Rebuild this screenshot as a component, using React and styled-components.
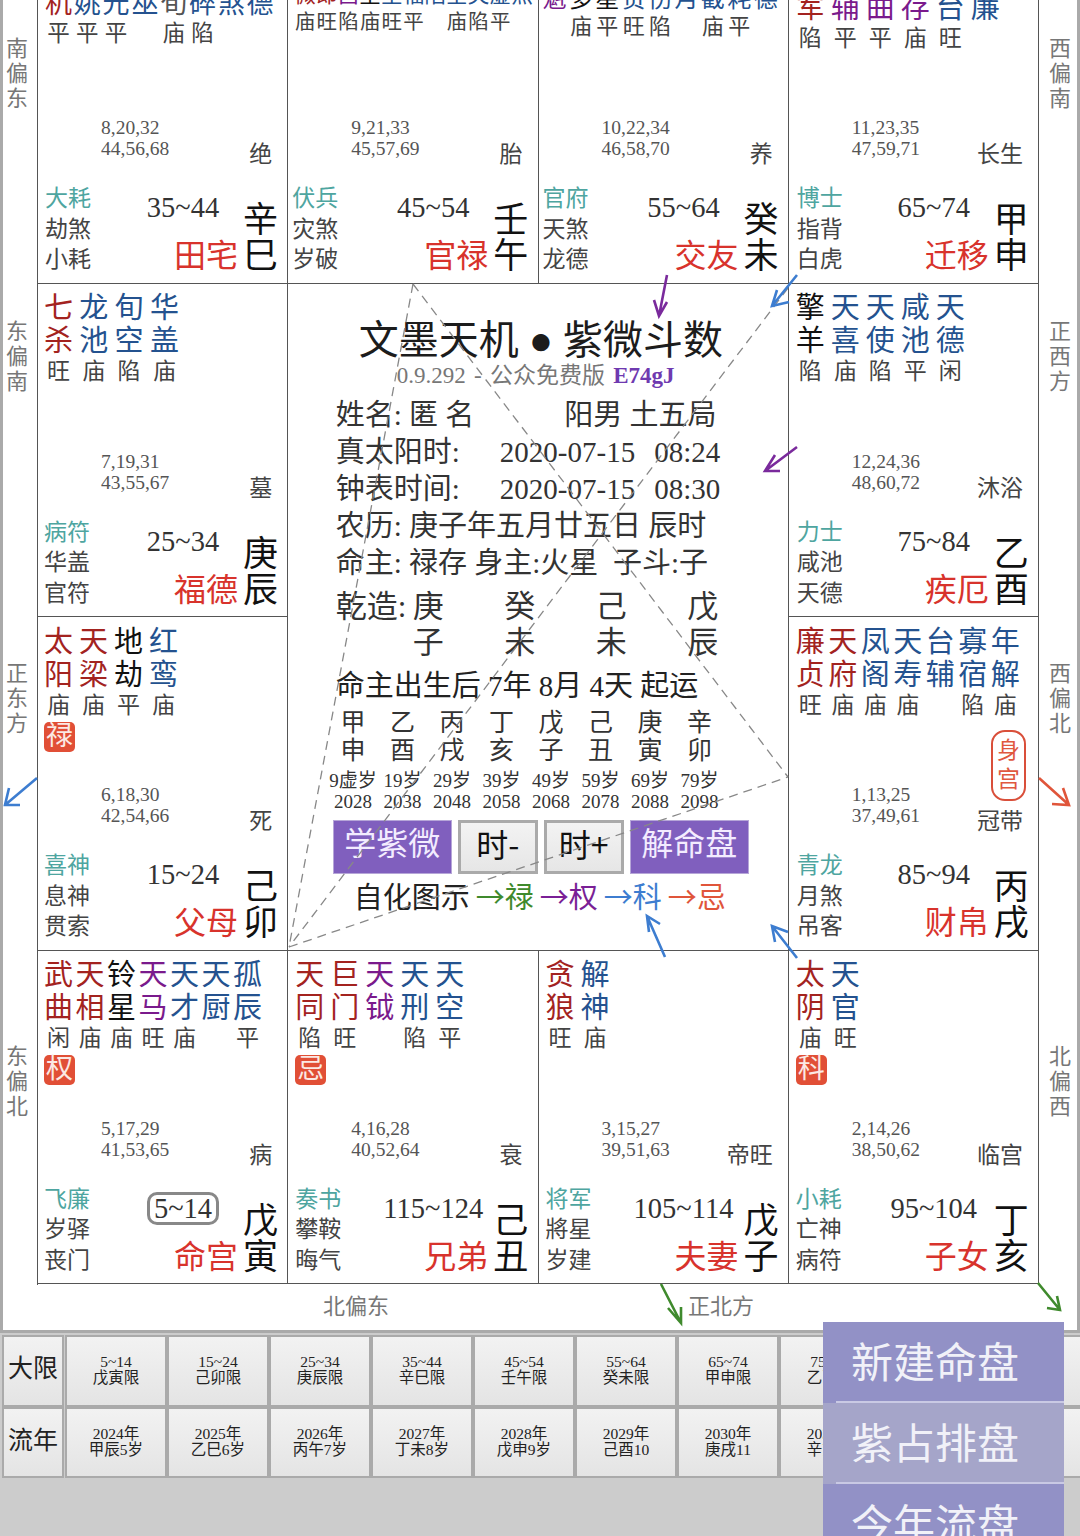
import React from "react";
import styled, { createGlobalStyle } from "styled-components";

const FONT = '"Liberation Serif", "Noto Sans CJK SC", serif';
const SANS = '"Noto Sans CJK SC", sans-serif';
const RED = "#a3231f";
const BLUE = "#24528f";
const PURPLE = "#7a1a8c";
const BLACK = "#111111";

// [上字, 下字, 颜色, 亮度, 四化]
const palaces = [
  {
    size: 27, step: 28.8, brightSize: 22.5, pad: 7, gx: 7,
    stars: [["天", "机", RED, "平"], ["天", "姚", BLUE, "平"], ["恩", "光", BLUE, "平"], ["天", "巫", BLUE, ""], ["截", "旬", "#555", "庙"], ["天", "碎", BLUE, "陷"], ["阴", "煞", BLUE, ""], ["月", "德", BLUE, ""]],
    nums: ["8,20,32", "44,56,68"], stage: "绝", god: ["大耗", "劫煞", "小耗"], range: "35~44", name: "田宅", stem: "辛", branch: "巳",
  },
  {
    size: 21.5, step: 21.7, brightSize: 20.5, pad: 6, gx: 4,
    stars: [["紫", "微", RED, "庙"], ["破", "郎", RED, "旺"], ["文", "昌", PURPLE, "陷"], ["火", "星", BLACK, "庙"], ["天", "星", BLUE, "旺"], ["天", "福", BLUE, "平"], ["截", "陷", BLUE, ""], ["地", "空", BLUE, "庙"], ["天", "哭", BLUE, "陷"], ["天", "虚", BLUE, "平"], ["阴", "煞", BLUE, ""]],
    nums: ["9,21,33", "45,57,69"], stage: "胎", god: ["伏兵", "灾煞", "岁破"], range: "45~54", name: "官禄", stem: "壬", branch: "午",
  },
  {
    size: 24, step: 26.4, brightSize: 22, pad: 4, gx: 4,
    stars: [["天", "魁", PURPLE, ""], ["陀", "多", BLACK, "庙"], ["文", "星", BLACK, "平"], ["天", "贵", BLUE, "旺"], ["天", "伤", BLUE, "陷"], ["龙", "月", BLUE, ""], ["旬", "截", BLUE, "庙"], ["大", "耗", BLUE, "平"], ["天", "德", BLUE, ""]],
    nums: ["10,22,34", "46,58,70"], stage: "养", god: ["官府", "天煞", "龙德"], range: "55~64", name: "交友", stem: "癸", branch: "未",
  },
  {
    size: 29, step: 35, pad: 7, gx: 8,
    stars: [["破", "军", RED, "陷"], ["左", "辅", PURPLE, "平"], ["文", "曲", PURPLE, "平"], ["禄", "存", PURPLE, "庙"], ["三", "台", BLUE, "旺"], ["蜚", "廉", BLUE, ""]],
    nums: ["11,23,35", "47,59,71"], stage: "长生", god: ["博士", "指背", "白虎"], range: "65~74", name: "迁移", stem: "甲", branch: "申",
  },
  {
    size: 29, step: 35.3, pad: 6, gx: 6,
    stars: [["七", "杀", RED, "旺"], ["龙", "池", BLUE, "庙"], ["旬", "空", BLUE, "陷"], ["华", "盖", BLUE, "庙"]],
    nums: ["7,19,31", "43,55,67"], stage: "墓", god: ["病符", "华盖", "官符"], range: "25~34", name: "福德", stem: "庚", branch: "辰",
  },
  "center",
  {
    size: 29, step: 35, pad: 7, gx: 8,
    stars: [["擎", "羊", BLACK, "陷"], ["天", "喜", BLUE, "庙"], ["天", "使", BLUE, "陷"], ["咸", "池", BLUE, "平"], ["天", "德", BLUE, "闲"]],
    nums: ["12,24,36", "48,60,72"], stage: "沐浴", god: ["力士", "咸池", "天德"], range: "75~84", name: "疾厄", stem: "乙", branch: "酉",
  },
  {
    size: 29, step: 35, pad: 6, gx: 6,
    stars: [["太", "阳", RED, "庙", "禄"], ["天", "梁", RED, "庙"], ["地", "劫", BLACK, "平"], ["红", "鸾", BLUE, "庙"]],
    nums: ["6,18,30", "42,54,66"], stage: "死", god: ["喜神", "息神", "贯索"], range: "15~24", name: "父母", stem: "己", branch: "卯",
  },
  {
    size: 29, step: 32.5, pad: 7, gx: 8,
    stars: [["廉", "贞", RED, "旺"], ["天", "府", RED, "庙"], ["凤", "阁", BLUE, "庙"], ["天", "寿", BLUE, "庙"], ["台", "辅", BLUE, ""], ["寡", "宿", BLUE, "陷"], ["年", "解", BLUE, "庙"]],
    nums: ["1,13,25", "37,49,61"], stage: "冠带", seal: "身宫", god: ["青龙", "月煞", "吊客"], range: "85~94", name: "财帛", stem: "丙", branch: "戌",
  },
  {
    size: 29, step: 31.5, pad: 6, gx: 6,
    stars: [["武", "曲", RED, "闲", "权"], ["天", "相", RED, "庙"], ["铃", "星", BLACK, "庙"], ["天", "马", PURPLE, "旺"], ["天", "才", BLUE, "庙"], ["天", "厨", BLUE, ""], ["孤", "辰", BLUE, "平"]],
    nums: ["5,17,29", "41,53,65"], stage: "病", god: ["飞廉", "岁驿", "丧门"], range: "5~14", boxed: true, name: "命宫", stem: "戊", branch: "寅",
  },
  {
    size: 29, step: 35, pad: 7, gx: 7,
    stars: [["天", "同", RED, "陷", "忌"], ["巨", "门", RED, "旺"], ["天", "钺", PURPLE, ""], ["天", "刑", BLUE, "陷"], ["天", "空", BLUE, "平"]],
    nums: ["4,16,28", "40,52,64"], stage: "衰", god: ["奏书", "攀鞍", "晦气"], range: "115~124", name: "兄弟", stem: "己", branch: "丑",
  },
  {
    size: 29, step: 35, pad: 7, gx: 7,
    stars: [["贪", "狼", RED, "旺"], ["解", "神", BLUE, "庙"]],
    nums: ["3,15,27", "39,51,63"], stage: "帝旺", god: ["将军", "將星", "岁建"], range: "105~114", name: "夫妻", stem: "戊", branch: "子",
  },
  {
    size: 29, step: 35, pad: 7, gx: 7,
    stars: [["太", "阴", RED, "庙", "科"], ["天", "官", BLUE, "旺"]],
    nums: ["2,14,26", "38,50,62"], stage: "临宫", god: ["小耗", "亡神", "病符"], range: "95~104", name: "子女", stem: "丁", branch: "亥",
  },
];

const RAIL_LEFT = [["南偏东", 85], ["东偏南", 34], ["正东方", 43], ["东偏北", 92]];
const RAIL_RIGHT = [["西偏南", 85], ["正西方", 34], ["西偏北", 43], ["北偏西", 92]];

const luck = [
  ["甲", "申", "9虚岁", "2028"], ["乙", "酉", "19岁", "2038"], ["丙", "戌", "29岁", "2048"], ["丁", "亥", "39岁", "2058"],
  ["戊", "子", "49岁", "2068"], ["己", "丑", "59岁", "2078"], ["庚", "寅", "69岁", "2088"], ["辛", "卯", "79岁", "2098"],
];

const daxian = [
  ["5~14", "戊寅限"], ["15~24", "己卯限"], ["25~34", "庚辰限"], ["35~44", "辛巳限"], ["45~54", "壬午限"],
  ["55~64", "癸未限"], ["65~74", "甲申限"], ["75~84", "乙酉限"], ["85~94", "丙戌限"], ["95~104", "丁亥限"],
];
const liunian = [
  ["2024年", "甲辰5岁"], ["2025年", "乙巳6岁"], ["2026年", "丙午7岁"], ["2027年", "丁未8岁"], ["2028年", "戊申9岁"],
  ["2029年", "己酉10"], ["2030年", "庚戌11"], ["2031年", "辛亥12"], ["2032年", "壬子13"], ["2033年", "癸丑14"],
];

const legend = [["禄", "#3f8a2d"], ["权", "#7a1f96"], ["科", "#3d7dd0"], ["忌", "#e0553a"]];

const arrows = [
  { color: "#7a2a9c", d: "M667 275 L659 316 M654 300 L659 316 L667 302" },
  { color: "#3d7dd0", d: "M797 275 L772 306 M777 290 L772 306 L789 302" },
  { color: "#7a2a9c", d: "M797 447 L765 471 M775 455 L765 471 L780 471" },
  { color: "#3d7dd0", d: "M37 778 L5 805 M9 788 L5 805 L20 805" },
  { color: "#e0553a", d: "M1039 778 L1069 805 M1063 788 L1069 805 L1052 804" },
  { color: "#3d7dd0", d: "M665 957 L647 916 M649 932 L647 916 L660 924" },
  { color: "#3d7dd0", d: "M797 958 L772 926 M775 942 L772 926 L788 932" },
  { color: "#3f8a2d", d: "M661 1284 L681 1323 M668 1308 L681 1323 L681 1307" },
  { color: "#3f8a2d", d: "M1038 1283 L1060 1310 M1047 1308 L1060 1310 L1057 1296" },
];

const Palace = ({ data }) => (
  <PalaceCell>
    <StarRow $pad={data.pad}>
      {data.stars.map((s, i) => (
        <StarCol key={i} $step={data.step}>
          <StarText $size={data.size} $color={s[2]}>{s[0]}<br />{s[1]}</StarText>
          <Bright $size={data.size} $font={data.brightSize || 23}>{s[3] || "\u00a0"}</Bright>
          {s[4] && <Badge>{s[4]}</Badge>}
        </StarCol>
      ))}
    </StarRow>
    <MetaRow>
      <Nums>{data.nums[0]}<br />{data.nums[1]}</Nums>
      <StageCol>
        {data.seal && <Seal>{data.seal}</Seal>}
        <Stage>{data.stage}</Stage>
      </StageCol>
    </MetaRow>
    <Foot>
      <Gods $gx={data.gx}>
        <GodTop>{data.god[0]}</GodTop>
        <div>{data.god[1]}</div>
        <div>{data.god[2]}</div>
      </Gods>
      <MidCol>
        <Range $boxed={data.boxed}>{data.range}</Range>
        <PalaceName>{data.name}</PalaceName>
      </MidCol>
      <Stem>{data.stem}<br />{data.branch}</Stem>
    </Foot>
  </PalaceCell>
);

const Center = () => (
  <CenterCell>
    <Title>文墨天机 ● 紫微斗数</Title>
    <Version>0.9.292 - 公众免费版 <Code>E74gJ</Code></Version>
    <InfoLine>姓名: 匿 名<Spacer $w={90} />阳男 土五局</InfoLine>
    <InfoLine>真太阳时:<Spacer $w={40} />2020-07-15<Spacer $w={19} />08:24</InfoLine>
    <InfoLine>钟表时间:<Spacer $w={40} />2020-07-15<Spacer $w={19} />08:30</InfoLine>
    <InfoLine>农历: 庚子年五月廿五日 辰时</InfoLine>
    <InfoLine>命主: 禄存 身主:火星{"  "}子斗:子</InfoLine>
    <Bazi>
      <span>乾造:</span><span>庚</span><span>癸</span><span>己</span><span>戊</span>
      <span /><span>子</span><span>未</span><span>未</span><span>辰</span>
    </Bazi>
    <QiYun>命主出生后 7年 8月 4天 起运</QiYun>
    <LuckGrid>
      {luck.map((l) => (
        <LuckCol key={l[3]}>
          <LuckStem>{l[0]}<br />{l[1]}</LuckStem>
          <LuckAge>{l[2]}<br />{l[3]}</LuckAge>
        </LuckCol>
      ))}
    </LuckGrid>
    <ButtonRow>
      <PurpleButton>学紫微</PurpleButton>
      <GrayButton>时-</GrayButton>
      <GrayButton>时+</GrayButton>
      <PurpleButton>解命盘</PurpleButton>
    </ButtonRow>
    <Legend>
      自化图示
      {legend.map(([t, c]) => (
        <LegendItem key={t} $color={c}>→{t}</LegendItem>
      ))}
    </Legend>
  </CenterCell>
);

export default function App() {
  return (
    <Page>
      <GlobalStyle />
      <Panel>
        <Board>
          <Rail>
            {RAIL_LEFT.map(([t, top]) => <RailLabel key={t} $top={top}>{t}</RailLabel>)}
          </Rail>
          <Chart>
            {palaces.map((p, i) => (p === "center" ? <Center key={i} /> : <Palace key={i} data={p} />))}
          </Chart>
          <RightRail>
            {RAIL_RIGHT.map(([t, top]) => <RailLabel key={t} $top={top}>{t}</RailLabel>)}
          </RightRail>
        </Board>
        <BottomRail>
          <BottomLabel $w={365}>北偏东</BottomLabel>
          <BottomLabel>正北方</BottomLabel>
        </BottomRail>
      </Panel>

      <Table>
        <RowLabel>大限</RowLabel>
        {daxian.map((d) => <Cell key={d[1]}>{d[0]}<br />{d[1]}</Cell>)}
        <RowLabel>流年</RowLabel>
        {liunian.map((d) => <Cell key={d[0]}>{d[0]}<br />{d[1]}</Cell>)}
      </Table>

      <Overlay viewBox="0 0 1080 1340" width="1080" height="1340">
        <g stroke="#888" strokeWidth="1.3" strokeDasharray="9 6" fill="none">
          <path d="M413 284 L289 947" />
          <path d="M413 284 L788 777" />
          <path d="M788 288 L289 947" />
          <path d="M289 947 L788 777" />
        </g>
        {arrows.map((a, i) => (
          <path key={i} d={a.d} stroke={a.color} strokeWidth="2.6" fill="none" />
        ))}
      </Overlay>

      <Menu>
        <MenuItem>新建命盘</MenuItem>
        <MenuItem $light>紫占排盘</MenuItem>
        <MenuItem>今年流盘</MenuItem>
      </Menu>
    </Page>
  );
}

const GlobalStyle = createGlobalStyle`
  html, body {
    margin: 0;
    padding: 0;
    background: #cccccc;
  }
  body {
    font-family: ${FONT};
    color: #333;
  }
`;

const Page = styled.div`
  position: relative;
  width: 1080px;
  height: 1536px;
  overflow: hidden;
  background: #cccccc;
`;

const Panel = styled.div`
  margin-top: -50px;
  width: 1080px;
  box-sizing: border-box;
  background: #fff;
  border-left: 3px solid #aaa;
  border-right: 3px solid #aaa;
  border-bottom: 3px solid #aaa;
`;

const Board = styled.div`
  display: grid;
  grid-template-columns: 34px 1002px 38px;
`;

const Rail = styled.div`
  display: grid;
  grid-template-rows: repeat(4, 333.5px);
  justify-items: start;
  padding: 1px 0 0 3px;
`;

const RightRail = styled(Rail)`
  padding-left: 10px;
`;

const RailLabel = styled.div`
  margin-top: ${(p) => p.$top}px;
  width: 22px;
  font-size: 22px;
  line-height: 25px;
  color: #777;
  text-align: center;
`;

const Chart = styled.div`
  display: grid;
  grid-template-columns: repeat(4, 250.25px);
  grid-template-rows: repeat(4, 333.5px);
  border-left: 1px solid #555;
  border-top: 1px solid #555;
  margin-top: -1px;
  height: 1335px;
`;

const PalaceCell = styled.div`
  display: flex;
  flex-direction: column;
  min-width: 0;
  min-height: 0;
  padding-top: 8.5px;
  box-sizing: border-box;
  border-right: 1px solid #555;
  border-bottom: 1px solid #555;
`;

const StarRow = styled.div`
  display: flex;
  padding-left: ${(p) => p.$pad}px;
`;

const StarCol = styled.div`
  width: ${(p) => p.$step}px;
  flex: none;
`;

const StarText = styled.div`
  width: ${(p) => p.$size}px;
  font-size: ${(p) => p.$size}px;
  line-height: ${(p) => p.$size * 1.14}px;
  color: ${(p) => p.$color};
  text-align: center;
`;

const Bright = styled.div`
  width: ${(p) => p.$size}px;
  font-size: ${(p) => p.$font}px;
  line-height: 28px;
  color: #444;
  white-space: nowrap;
  display: flex;
  justify-content: center;
`;

const Badge = styled.div`
  width: 31px;
  height: 30px;
  margin-top: 2px;
  border-radius: 5px;
  background: #e14f36;
  color: #fbe9e4;
  font-size: 27px;
  line-height: 29px;
  text-align: center;
`;

const MetaRow = styled.div`
  margin-top: auto;
  margin-bottom: 16px;
  padding: 0 15px 0 63px;
  display: flex;
  justify-content: space-between;
  align-items: flex-end;
`;

const Nums = styled.div`
  font-size: 19.5px;
  line-height: 21px;
  color: #555;
  margin-bottom: 9px;
  white-space: nowrap;
`;

const StageCol = styled.div`
  display: flex;
  flex-direction: column;
  align-items: flex-end;
`;

const Stage = styled.div`
  font-size: 23px;
  line-height: 26px;
  color: #444;
`;

const Seal = styled.div`
  width: 35px;
  height: 71px;
  box-sizing: border-box;
  margin: 0 -3px 8px 0;
  border: 2.5px solid #d94f3a;
  border-radius: 14px;
  color: #e0583f;
  font-size: 23px;
  line-height: 29px;
  text-align: center;
  padding-top: 4px;
`;

const Foot = styled.div`
  display: grid;
  grid-template-columns: 90px 110px 1fr;
  padding-bottom: 7px;
`;

const Gods = styled.div`
  padding-left: ${(p) => p.$gx}px;
  font-size: 23px;
  line-height: 30.5px;
  color: #444;
`;

const GodTop = styled.div`
  color: #4ea5a0;
`;

const MidCol = styled.div`
  display: flex;
  flex-direction: column;
  align-items: center;
`;

const Range = styled.div`
  box-sizing: border-box;
  margin: ${(p) => (p.$boxed ? "7px 0 13.5px" : "4px 0 9px")};
  height: ${(p) => (p.$boxed ? "33px" : "40px")};
  padding: ${(p) => (p.$boxed ? "0 4px" : "0")};
  border: ${(p) => (p.$boxed ? "3px solid #888" : "none")};
  border-radius: 10px;
  font-size: 28.5px;
  line-height: ${(p) => (p.$boxed ? "27px" : "40px")};
  color: #333;
  white-space: nowrap;
`;

const PalaceName = styled.div`
  align-self: flex-end;
  font-size: 32px;
  line-height: 38px;
  color: #d8332c;
  white-space: nowrap;
`;

const Stem = styled.div`
  padding: 19px 0 0 5px;
  font-size: 35px;
  line-height: 36px;
  color: #111;
`;

const CenterCell = styled.div`
  grid-column: span 2;
  grid-row: span 2;
  box-sizing: border-box;
  padding: 33px 0 0 47.5px;
  border-right: 1px solid #555;
  border-bottom: 1px solid #555;
  white-space: pre;
`;

const Title = styled.div`
  margin-left: 23px;
  font-size: 40px;
  line-height: 48px;
  color: #1c1c1c;
`;

const Version = styled.div`
  margin: -2px 0 8px 61px;
  font-size: 23px;
  line-height: 26px;
  word-spacing: 2.5px;
  color: #777;
`;

const Code = styled.span`
  font-weight: bold;
  font-size: 23px;
  color: #6f3ab0;
`;

const InfoLine = styled.div`
  display: flex;
  font-size: 29px;
  line-height: 37px;
  color: #333;
`;

const Spacer = styled.span`
  flex: none;
  width: ${(p) => p.$w}px;
`;

const Bazi = styled.div`
  display: grid;
  grid-template-columns: 77px repeat(4, 91.5px);
  margin-top: 7.5px;
  font-size: 31px;
  line-height: 36px;
  color: #333;
`;

const QiYun = styled.div`
  margin-top: 7px;
  font-size: 29px;
  line-height: 36px;
  color: #222;
`;

const LuckGrid = styled.div`
  display: grid;
  grid-template-columns: repeat(8, 49.5px);
  margin: 5px 0 0 -7.5px;
`;

const LuckCol = styled.div`
  text-align: center;
  white-space: nowrap;
`;

const LuckStem = styled.div`
  font-size: 25px;
  line-height: 28px;
  color: #333;
`;

const LuckAge = styled.div`
  margin-top: 4.5px;
  font-size: 19px;
  line-height: 21px;
  color: #333;
`;

const ButtonRow = styled.div`
  display: flex;
  gap: 6px;
  margin: 8.5px 0 0 -3px;
`;

const PurpleButton = styled.div`
  width: 119px;
  height: 54px;
  box-sizing: border-box;
  background: #805fbe;
  border: 1px solid #b6a6d8;
  color: #f3ecff;
  font-size: 32px;
  line-height: 47px;
  text-align: center;
`;

const GrayButton = styled.div`
  width: 80px;
  height: 54px;
  box-sizing: border-box;
  background: linear-gradient(#f3f3f3, #e6e6e6);
  border: 3px solid #aaa;
  color: #111;
  font-family: ${SANS};
  font-size: 32px;
  line-height: 41px;
  text-align: center;
`;

const Legend = styled.div`
  display: flex;
  margin: 3px 0 0 18px;
  font-family: ${SANS};
  font-size: 29px;
  line-height: 36px;
  color: #222;
`;

const LegendItem = styled.span`
  margin-left: 6px;
  color: ${(p) => p.$color};
`;

const BottomRail = styled.div`
  display: flex;
  box-sizing: border-box;
  height: 45px;
  padding: 8px 0 0 320px;
`;

const BottomLabel = styled.div`
  width: ${(p) => (p.$w ? `${p.$w}px` : "auto")};
  font-size: 22px;
  line-height: 28px;
  color: #777;
`;

const Table = styled.div`
  display: grid;
  grid-template-columns: 63px repeat(10, 102px);
  grid-auto-rows: 71.5px;
  width: 1150px;
  margin: 2px 0 0 2px;
`;

const RowLabel = styled.div`
  box-sizing: border-box;
  border: 2px solid #aaa;
  margin-right: 1px;
  background: linear-gradient(#f2f2f2, #e4e4e4);
  font-size: 25px;
  line-height: 64px;
  text-align: center;
  color: #222;
`;

const Cell = styled.div`
  box-sizing: border-box;
  border: 2px solid #aaa;
  background: linear-gradient(#f2f2f2, #e4e4e4);
  padding-top: 17px;
  font-size: 15.5px;
  line-height: 16px;
  text-align: center;
  color: #222;
`;

const Overlay = styled.svg`
  position: absolute;
  top: 0;
  left: 0;
  pointer-events: none;
`;

const Menu = styled.div`
  position: absolute;
  left: 823px;
  top: 1322px;
  width: 241px;
`;

const MenuItem = styled.div`
  position: relative;
  height: 81px;
  box-sizing: border-box;
  background: ${(p) => (p.$light ? "#a5a5c9" : "#9291c6")};
  color: #f1f1f8;
  font-size: 42px;
  line-height: 84px;
  padding-left: 28px;
  &::after {
    content: "";
    position: absolute;
    left: 13px;
    right: 0;
    bottom: 0;
    height: 2px;
    background: #c9c9e4;
  }
`;
